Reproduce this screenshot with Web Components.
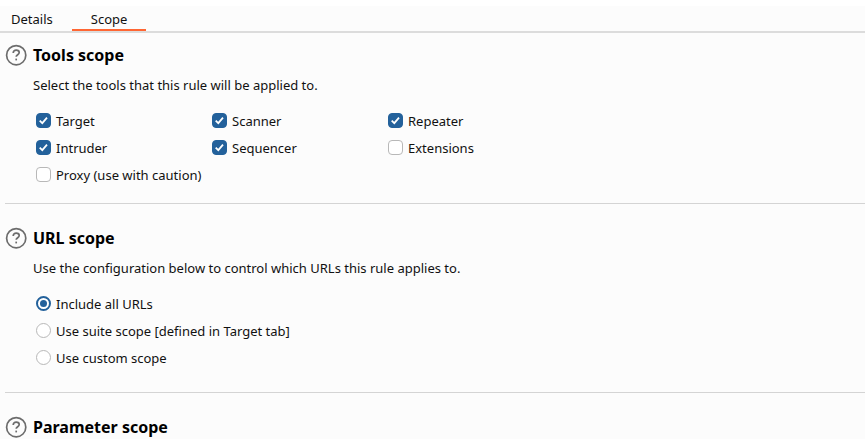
<!DOCTYPE html>
<html lang="en"><head><meta charset="utf-8"><title>Rule scope</title>
<style>
body{margin:0;background:#fcfcfc;color:#111;font:13px/20px "Noto Sans","Open Sans",sans-serif}
</style></head><body>
<scope-editor></scope-editor>
<script>
const define=(name,html,setup)=>{
  const t=document.createElement('template');t.innerHTML=html;
  customElements.define(name,class extends HTMLElement{
    connectedCallback(){
      if(this.shadowRoot)return;
      const root=this.attachShadow({mode:'open'});
      root.append(t.content.cloneNode(true));
      if(setup)setup(this,root);
    }
  });
};

define('tab-strip',`<style>
:host{display:block;border-top:6px solid #fff}
nav{display:flex;border-bottom:2px solid #dcdcdc}
</style><nav role="tablist"><slot></slot></nav>`);

define('tab-item',`<style>
:host{display:block}
button{display:block;border:0;border-bottom:2px solid transparent;padding:3px 19px 0 11px;background:none;color:inherit;font:inherit;line-height:20px}
:host([selected]) button{border-color:#ff6633;padding:3px 19px 0}
</style><button type="button" role="tab"><slot></slot></button>`,
(h,r)=>r.querySelector('button').setAttribute('aria-selected',h.hasAttribute('selected')));

define('help-button',`<style>
:host{display:block}
button{display:block;padding:0;border:0;background:none}
svg{display:block}
</style><button type="button" aria-label="Help"><svg width="22" height="22" viewBox="0 0 22 22" fill="none" stroke="#6c6c6c" stroke-width="1.7"><circle cx="11.2" cy="11.2" r="9.6"/><path d="M8.2 9C8.2 7.2 9.5 6.2 11.2 6.2S14.2 7.2 14.2 8.6C14.2 10.6 11.2 10.8 11.2 12.8"/><path d="M11.2 14.6v1.8"/></svg></button>`);

define('scope-section',`<style>
:host{display:block;padding:23px 0 0 5px}
:host([first]){padding-top:11px}
section{display:grid;grid-template-columns:22px 1fr;column-gap:6px}
h2{margin:0;color:#000;font-size:16px;line-height:22px}
.body{grid-column:2;padding-top:9px}
</style><section><help-button></help-button><h2><slot name="title"></slot></h2><div class="body"><slot></slot></div></section>`);

define('section-rule',`<style>:host{display:block}hr{margin:0 0 0 5px;border:0;border-top:1px solid #d4d4d4}</style><hr>`);

define('choice-group',`<style>
:host{display:block}
div{display:grid;grid-template-columns:repeat(var(--columns,1),176px);grid-auto-rows:27px;align-items:center;padding:12px 0 15px 3px}
div[role=radiogroup]{padding-bottom:21px}
</style><div><slot></slot></div>`,
(h,r)=>{const d=r.querySelector('div');d.setAttribute('role',h.getAttribute('kind'));d.setAttribute('aria-label',h.getAttribute('label'))});

define('choice-item',`<style>
:host{display:block;white-space:nowrap}
label{display:flex;align-items:center;gap:5px}
input{appearance:none;box-sizing:border-box;display:grid;place-items:center;width:15px;height:15px;margin:0;border:1px solid #b8b8b8;border-radius:4px;background:#fff}
input[type=radio]{border-radius:50%}
input[type=checkbox]:checked{border-color:#23619b;background:#23619b}
input[type=radio]:checked{border:2px solid #23619b}
input[type=radio]:checked::before{content:"";width:7px;height:7px;border-radius:50%;background:#23619b}
.box{display:grid}
.box>*{grid-area:1/1}
svg{pointer-events:none;visibility:hidden}
input[type=checkbox]:checked+svg{visibility:visible}
</style><label><span class="box"><input><svg width="15" height="15" viewBox="0 0 15 15" fill="none" stroke="#fff" stroke-width="1.8"><path d="M3.7 7.6L6.3 10.1L11 4.7"/></svg></span><span><slot></slot></span></label>`,
(h,r)=>{
  const i=r.querySelector('input');
  i.type=h.getAttribute('type')||'checkbox';
  i.checked=h.hasAttribute('checked');
  if(i.type==='radio')i.addEventListener('change',()=>{
    for(const o of h.parentElement.children)if(o!==h)o.shadowRoot.querySelector('input').checked=false;
  });
});

define('scope-editor',`<style>
:host{display:block}
p{margin:0}
.tools{--columns:3}
</style>
<tab-strip><tab-item>Details</tab-item><tab-item selected>Scope</tab-item></tab-strip>
<scope-section first><span slot="title">Tools scope</span><p>Select the tools that this rule will be applied to.</p>
<choice-group class="tools" kind="group" label="Tools scope">
<choice-item checked>Target</choice-item><choice-item checked>Scanner</choice-item><choice-item checked>Repeater</choice-item>
<choice-item checked>Intruder</choice-item><choice-item checked>Sequencer</choice-item><choice-item>Extensions</choice-item>
<choice-item>Proxy (use with caution)</choice-item></choice-group></scope-section>
<section-rule></section-rule>
<scope-section><span slot="title">URL scope</span><p>Use the configuration below to control which URLs this rule applies to.</p>
<choice-group kind="radiogroup" label="URL scope">
<choice-item type="radio" checked>Include all URLs</choice-item>
<choice-item type="radio">Use suite scope [defined in Target tab]</choice-item>
<choice-item type="radio">Use custom scope</choice-item></choice-group></scope-section>
<section-rule></section-rule>
<scope-section><span slot="title">Parameter scope</span></scope-section>`);
</script></body></html>
